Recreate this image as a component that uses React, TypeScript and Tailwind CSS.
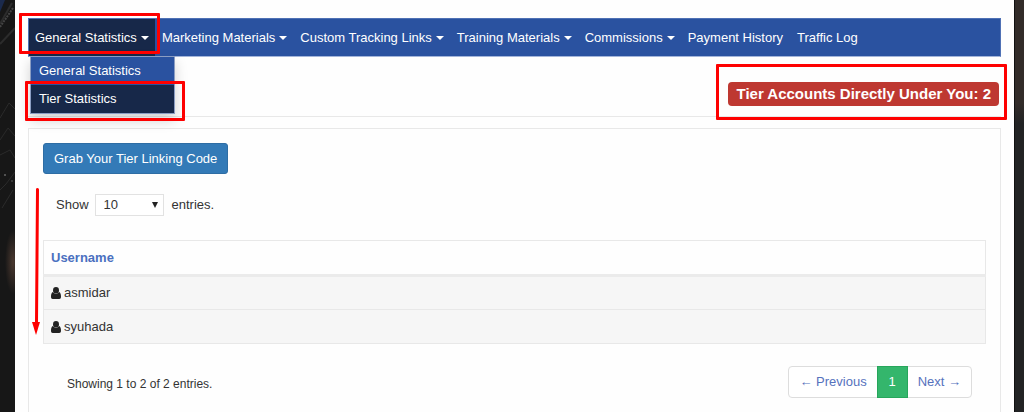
import React from "react";

const NAV_ITEMS = [
  { label: "Marketing Materials", menu: true },
  { label: "Custom Tracking Links", menu: true },
  { label: "Training Materials", menu: true },
  { label: "Commissions", menu: true },
  { label: "Payment History", menu: false },
  { label: "Traffic Log", menu: false },
];

const USERS = ["asmidar", "syuhada"];

function Caret() {
  return (
    <span
      aria-hidden="true"
      className="ml-1 h-0 w-0 border-x-4 border-t-4 border-x-transparent border-t-white"
    />
  );
}

function UserIcon() {
  return (
    <svg viewBox="0 0 20 24" className="h-3 w-2.5" fill="#222" aria-hidden="true">
      <ellipse cx="10" cy="6.5" rx="6" ry="6.5" />
      <path d="M4 10C1 11 0 14.5 0 19.5C0 22.500 1.400 24 3.400 24H16.600C18.600 24 20 22.500 20 19.500C20 14.500 19 11 16 10C14.500 12.500 12.500 13.300 10 13.300S5.500 12.500 4 10Z" />
    </svg>
  );
}

function Highlight({ className }: { className: string }) {
  return (
    <span
      aria-hidden="true"
      className={"pointer-events-none absolute rounded-[1px] border-[3px] border-[#fe0000] " + className}
    />
  );
}

/* Dark keyboard backdrop visible in the page gutter */
function Backdrop() {
  return (
    <svg viewBox="0 0 15 412" preserveAspectRatio="none" className="h-full w-full" aria-hidden="true">
      <defs>
        <radialGradient id="glow">
          <stop offset="0" stopColor="#4a382f" />
          <stop offset="1" stopColor="#4a382f" stopOpacity="0" />
        </radialGradient>
      </defs>
      <rect width="15" height="412" fill="#171717" />
      <path d="M0 0H5L0 12Z" fill="#1b2a4c" />
      <path d="M0 24L12 3M0 44L15 28" stroke="#2c2c2c" strokeWidth="2" />
      <path d="M0 27L13 8" stroke="#444" strokeWidth="2" strokeDasharray="2 1" />
      <path d="M0 118L9 103L15 109M0 140L8 128L15 136M0 155L10 150L15 158M0 190L6 184L15 172M2 208L13 190" stroke="#2b2b2b" fill="none" />
      <circle cx="5" cy="175" r="1" fill="#666" />
      <circle cx="12" cy="181" r="1" fill="#444" />
      <ellipse cx="13" cy="262" rx="8" ry="32" fill="url(#glow)" />
    </svg>
  );
}

export default function App() {
  return (
    <div className="flex min-h-screen bg-[#171717] font-['Liberation_Sans',Arial,sans-serif] text-[13px] leading-5 text-[#333]">
      <div className="relative w-[15px] shrink-0">
        <div className="absolute inset-0">
          <Backdrop />
        </div>
      </div>

      <main className="flex min-w-0 flex-1 flex-col bg-[#fefefe] px-[13px] pt-[18px]">
        <nav className="flex h-[39px] items-stretch border border-[#4f71b5] border-b-[#a3b5da] bg-[#2a52a0] text-white">
          <div className="relative flex">
            <button type="button" className="flex items-center bg-[#172849] pl-1.5 pr-1.5 whitespace-nowrap">
              General Statistics
              <Caret />
            </button>
            <ul className="absolute left-px top-[37px] z-10 w-[145px] border border-[#8b9dc2] bg-[#2a52a0] shadow-[0_6px_12px_rgba(0,0,0,0.175)]">
              <li>
                <a href="#general" className="block px-2 py-1">General Statistics</a>
              </li>
              <li>
                <a href="#tier" className="block bg-[#172849] px-2 py-1">Tier Statistics</a>
              </li>
              <Highlight className="-left-1.5 top-6 h-10 w-40" />
            </ul>
            <Highlight className="-left-2.5 -top-1.5 z-20 h-[41px] w-[141px]" />
          </div>
          {NAV_ITEMS.map((item) =>
            item.menu ? (
              <button key={item.label} type="button" className="flex items-center pl-[7px] pr-1.5 whitespace-nowrap">
                {item.label}
                <Caret />
              </button>
            ) : (
              <a key={item.label} href="#" className="flex items-center px-[7px] whitespace-nowrap">
                {item.label}
              </a>
            )
          )}
        </nav>

        <header className="flex h-[60px] items-start justify-end border-b border-[#e8e8e8] pt-[25px] pr-0.5">
          <h1 className="relative rounded bg-[#be3831] px-2 text-[15px] font-bold leading-6 text-white">
            Tier Accounts Directly Under You: 2
            <Highlight className="-left-3 -top-[18px] -right-2 h-14" />
          </h1>
        </header>

        <section className="relative mt-[11px] flex-1 border border-b-0 border-[#e8e8e8] px-3.5 pb-3.5 pt-3.5">
          <svg viewBox="0 0 10 148" className="absolute left-[3px] top-[59px] h-[148px] w-2.5" aria-hidden="true">
            <path d="M5.500 1.500L4.500 136" stroke="#fe0000" strokeWidth="3" strokeLinecap="round" />
            <path d="M0 134H8L4 147Z" fill="#fe0000" />
          </svg>

          <button type="button" className="h-[31px] rounded-[3px] border border-[#2e6da4] bg-[#337ab7] px-2.5 text-white">
            Grab Your Tier Linking Code
          </button>

          <div className="ml-[13px] mt-5 flex items-center">
            <label htmlFor="page-size">Show</label>
            <span className="relative ml-1.5 mr-2 flex">
              <select
                id="page-size"
                className="h-[22px] w-[69px] appearance-none border border-[#e2e2e2] bg-white pl-2 text-[13px] text-[#333]"
                defaultValue="10"
              >
                <option>10</option>
                <option>25</option>
                <option>50</option>
              </select>
              <svg viewBox="0 0 6 6" className="pointer-events-none absolute right-1.5 top-2 h-1.5 w-1.5" aria-hidden="true">
                <path d="M0 0H6L3 6Z" fill="#222" />
              </svg>
            </span>
            <label htmlFor="page-size">entries.</label>
          </div>

          <table className="mt-6 w-full border-collapse border border-[#e8e8e8]">
            <thead>
              <tr className="h-[35px] border-b-[3px] border-[#ebebeb]">
                <th scope="col" className="px-[7px] text-left font-bold text-[#4a70c0]">Username</th>
              </tr>
            </thead>
            <tbody>
              {USERS.map((name) => (
                <tr key={name} className="h-[34px] border-b border-[#e8e8e8] bg-[#f6f6f6]">
                  <td className="px-[7px]">
                    <span className="flex items-center gap-[3px]">
                      <UserIcon />
                      {name}
                    </span>
                  </td>
                </tr>
              ))}
            </tbody>
          </table>

          <footer className="mt-[22px] flex items-start justify-between pl-6 pr-3.5">
            <p className="pt-2 text-xs leading-5">Showing 1 to 2 of 2 entries.</p>
            <div className="flex h-8 rounded border border-[#ddd] bg-white text-[#5672bd]">
              <button type="button" className="px-2.5">← Previous</button>
              <button type="button" aria-current="page" className="-my-px w-[31px] border border-[#27a65b] bg-[#34b66c] text-white">
                1
              </button>
              <button type="button" className="px-2.5">Next →</button>
            </div>
          </footer>
        </section>
      </main>

      <div className="w-2.5 shrink-0 border-l border-[#111] bg-linear-to-b from-[#322c29] from-25% to-[#222324] to-30%" />
    </div>
  );
}
